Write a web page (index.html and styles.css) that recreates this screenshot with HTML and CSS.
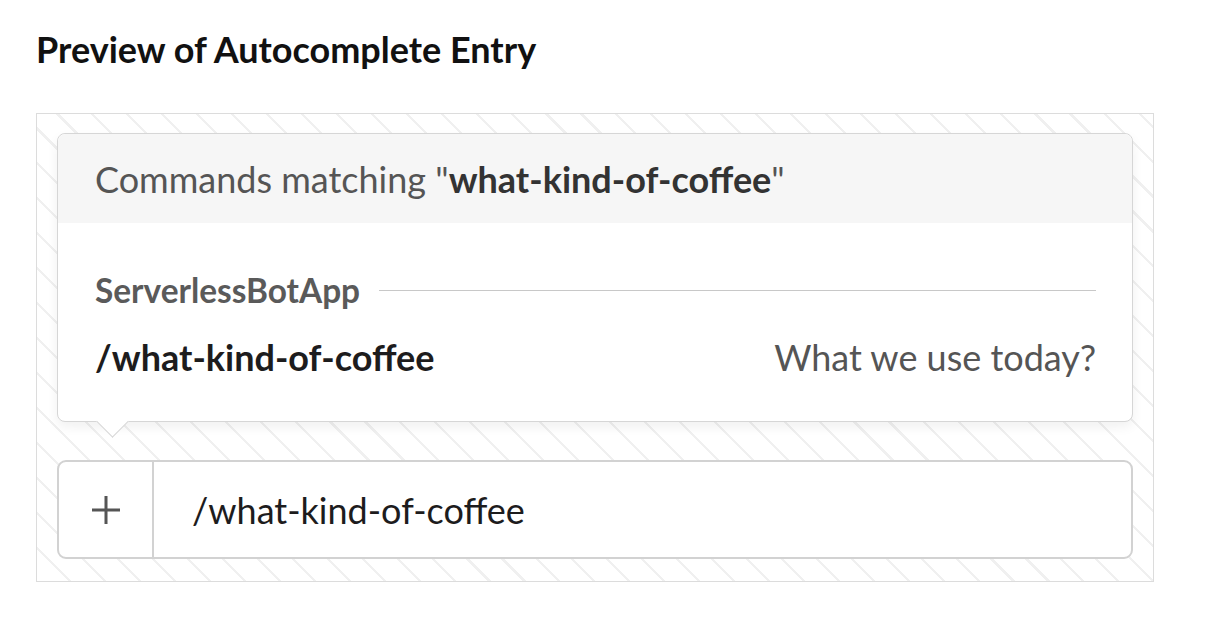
FILE: index.html
```html
<!DOCTYPE html>
<html>
<head>
    <meta charset="UTF-8">
    <title>Preview of Autocomplete Entry</title>
    <meta name="viewport" content="width=device-width, initial-scale=1.0">
    <link rel="stylesheet" href="styles.css">
</head>
<body>
    <div class="page">
        <h1 class="title">Preview of Autocomplete Entry</h1>

        <div class="preview">
            <div class="popup">
                <div class="popup-header">
                    Commands matching "<b>what-kind-of-coffee</b>"
                </div>
                <div class="popup-body">
                    <div class="app-row">
                        <span class="app-name">ServerlessBotApp</span>
                        <span class="app-line"></span>
                    </div>
                    <div class="command-row">
                        <span class="command">/what-kind-of-coffee</span>
                        <span class="command-desc">What we use today?</span>
                    </div>
                </div>
                <span class="popup-arrow"></span>
            </div>

            <div class="composer">
                <div class="composer-plus">
                    <svg width="32" height="32" viewBox="0 0 32 32">
                        <path d="M16 2v28M2 16h28" stroke="#555" stroke-width="3" fill="none"/>
                    </svg>
                </div>
                <div class="composer-text">/what-kind-of-coffee</div>
            </div>
        </div>
    </div>
</body>
</html>
```

FILE: styles.css
```css
body {
    margin: 0;
    background-color: white;
    color: #1d1c1d;
    font-family: Lato, "Open Sans", sans-serif;
}
.page {
    padding: 27px 0 0 36px;
}
.title {
    font-size: 36px;
    font-weight: 700;
    line-height: 44px;
    margin: 0 0 42px 0;
    color: #111;
}
.preview {
    width: 1118px;
    height: 469px;
    box-sizing: border-box;
    border: 1px solid #dcdcdc;
    padding: 19px 20px 0 20px;
    background: repeating-linear-gradient(45deg, #ffffff 0px, #ffffff 22.5px, #f0f0f0 22.5px, #f0f0f0 24.7px);
}
.popup {
    position: relative;
    background-color: white;
    border: 1px solid #d6d6d6;
    border-radius: 8px;
    box-shadow: 0 5px 12px rgba(0, 0, 0, 0.06);
    height: 289px;
    box-sizing: border-box;
}
.popup-header {
    background-color: #f6f6f6;
    height: 89px;
    border-radius: 8px 8px 0 0;
    display: flex;
    align-items: center;
    padding-left: 37px;
    font-size: 36px;
    color: #555;
}
.popup-header b {
    color: #333;
}
.popup-body {
    padding: 0 36px 0 37px;
}
.app-row {
    display: flex;
    align-items: center;
    gap: 19px;
    height: 36px;
    margin-top: 49px;
}
.app-name {
    font-size: 33.4px;
    font-weight: 700;
    color: #5a5a5a;
}
.app-line {
    flex: 1;
    height: 1px;
    background-color: #c8c8c8;
}
.command-row {
    display: flex;
    justify-content: space-between;
    align-items: center;
    margin-top: 29px;
    height: 40px;
}
.command {
    font-size: 36px;
    font-weight: 700;
    color: #1d1c1d;
}
.command-desc {
    font-size: 36px;
    color: #555;
}
/* the little tip under the popup, pointing at the composer */
.popup-arrow {
    position: absolute;
    left: 43px;
    bottom: -12px;
    width: 22px;
    height: 22px;
    background-color: white;
    border-right: 1px solid #d6d6d6;
    border-bottom: 1px solid #d6d6d6;
    transform: rotate(45deg);
}
.composer {
    display: flex;
    margin-top: 38px;
    height: 99px;
    box-sizing: border-box;
    border: 2px solid #d2d2d2;
    border-radius: 9px;
    background-color: white;
}
.composer-plus {
    width: 93px;
    border-right: 2px solid #d2d2d2;
    display: flex;
    align-items: center;
    justify-content: center;
}
.composer-text {
    display: flex;
    align-items: center;
    padding-left: 38px;
    font-size: 36px;
    color: #1d1c1d;
}
```
